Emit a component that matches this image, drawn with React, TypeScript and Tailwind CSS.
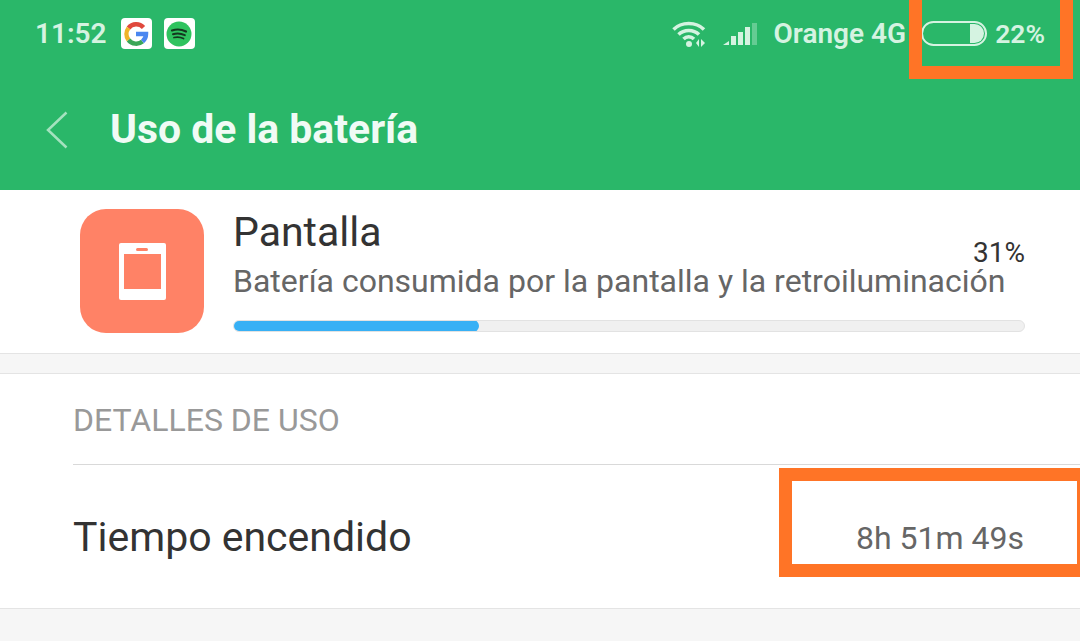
import React from 'react'

const WifiIcon = () => (
  <svg width="36" height="28" viewBox="0 0 36 28" fill="none" className="text-[#d5f3e1]">
    <path d="M1.500 9.500C9.500 1.500 24 1.500 32 9.500" stroke="currentColor" strokeWidth="3.500" />
    <path d="M6.500 14.500C12 9 21.500 9 27 14.500" stroke="currentColor" strokeWidth="3.500" />
    <path d="M11.500 19C14.500 16 19 16 22 19" stroke="currentColor" strokeWidth="3.500" />
    <circle cx="17" cy="24" r="3" fill="currentColor" />
    <path d="M27 19v8l-3-4zM29 19v8l4-4z" fill="currentColor" />
  </svg>
)

const SignalIcon = () => (
  <svg width="34" height="24" viewBox="0 0 34 24" className="text-[#d5f3e1]">
    <path d="M0 23l6-4v4z" fill="currentColor" />
    <rect x="8" y="14" width="5" height="9" fill="currentColor" />
    <rect x="15" y="10" width="5" height="13" fill="currentColor" />
    <rect x="22" y="5" width="5" height="18" fill="currentColor" />
    <rect x="29" y="1" width="5" height="22" fill="currentColor" opacity="0.35" />
  </svg>
)

const GoogleIcon = () => (
  <svg width="26" height="26" viewBox="0 0 26 26" fill="none" strokeWidth="4.500">
    <path d="M20.500 6.500A10 10 0 0 0 5.500 7" stroke="#e0483c" />
    <path d="M5.500 7A10 10 0 0 0 5.500 19" stroke="#f0b429" />
    <path d="M5.500 19A10 10 0 0 0 19.500 20.500" stroke="#3aa757" />
    <path d="M19.500 20.500A10 10 0 0 0 23 13H13" stroke="#4a86f0" />
  </svg>
)

const SpotifyIcon = () => (
  <svg width="26" height="26" viewBox="0 0 26 26" fill="none">
    <circle cx="13" cy="13" r="12.500" fill="#2fc35f" />
    <path d="M6 9.500C10.500 8 16 8.500 20 10.500" stroke="#14361f" strokeWidth="2.200" strokeLinecap="round" />
    <path d="M7 13.200C10.500 12 15.500 12.500 18.800 14.200" stroke="#14361f" strokeWidth="2" strokeLinecap="round" />
    <path d="M8 16.500C11 15.700 14.500 16 17.500 17.500" stroke="#14361f" strokeWidth="1.800" strokeLinecap="round" />
  </svg>
)

const BatteryIcon = () => (
  <div className="flex h-[25px] w-[66px] items-center justify-end rounded-full border-2 border-[#d5f3e1] pr-[1px]">
    <div className="h-[19px] w-[14px] rounded-r-full bg-[#d5f3e1]" />
  </div>
)

export default function App() {
  return (
    <div className="relative h-[641px] w-[1080px] overflow-hidden bg-[#f6f6f6] font-['Roboto',sans-serif]">
      <header className="h-[190px] bg-[#2ab769]">
        <div className="flex h-[67px] items-center pl-[35px] pr-[35px] text-[#d5f3e1]">
          <span className="text-[28px] font-semibold">11:52</span>
          <div className="ml-[14px] flex size-[31px] items-center justify-center rounded-[4px] bg-white">
            <GoogleIcon />
          </div>
          <div className="ml-[12px] flex size-[31px] items-center justify-center rounded-[4px] bg-white">
            <SpotifyIcon />
          </div>
          <div className="ml-auto flex items-center">
            <WifiIcon />
            <div className="ml-[15px]">
              <SignalIcon />
            </div>
            <span className="ml-[17px] text-[28px] font-semibold">Orange 4G</span>
            <div className="ml-[15px]">
              <BatteryIcon />
            </div>
            <span className="ml-[8px] text-[26.500px] font-semibold">22%</span>
          </div>
        </div>
        <div className="flex h-[126px] items-center pb-[1px] pl-[46px]">
          <svg width="22" height="38" viewBox="0 0 22 38" fill="none">
            <path d="M20.500 1.500L2 19l18.500 17.500" stroke="#a4e2bf" strokeWidth="2.500" />
          </svg>
          <h1 className="ml-[42px] text-[40.900px] font-bold text-[#f0fbf5]">Uso de la batería</h1>
        </div>
      </header>

      <section className="flex h-[164px] border-b border-[#e4e4e4] bg-white pl-20 pr-[55px] pt-[19px]">
        <div className="flex size-[124px] shrink-0 items-center justify-center rounded-[26px] bg-[#ff8266]">
          <div className="flex h-[57px] w-[47px] flex-col items-center rounded-[2px] bg-white px-[5px] pt-[5px]">
            <div className="h-[3px] w-[12px] rounded-full bg-[#ff8266]" />
            <div className="mt-[3px] h-[35px] w-full bg-[#ff8266]" />
          </div>
        </div>
        <div className="ml-[29px] min-w-0 flex-1">
          <div className="flex items-start justify-between">
            <span className="text-[41px] leading-[47px] text-[#333333]">Pantalla</span>
            <span className="mt-[32px] text-[28px] leading-[24px] text-[#333333]">31%</span>
          </div>
          <p className="whitespace-nowrap text-[32px] leading-[32px] text-[#666666]">
            Batería consumida por la pantalla y la retroiluminación
          </p>
          <div className="mt-[23px] h-[12px] overflow-hidden rounded-full border border-[#e2e2e2] bg-[#f0f0f0]">
            <div className="-m-px h-[12px] w-[246px] rounded-full bg-[#37b0f5]" />
          </div>
        </div>
      </section>

      <div className="h-[19px]" />

      <section className="h-[236px] border-y border-[#e4e4e4] bg-white pl-[73px]">
        <div className="flex h-[91px] items-center border-b border-[#d9d9d9] pt-[1px] text-[32px] text-[#999999]">
          DETALLES DE USO
        </div>
        <div className="flex h-[143px] items-center justify-between pr-[56px] pt-[2px]">
          <span className="text-[41px] text-[#333333]">Tiempo encendido</span>
          <span className="text-[32px] text-[#666666]">8h 51m 49s</span>
        </div>
      </section>

      {/* recuadros naranjas encima de la captura */}
      <div className="absolute -top-4 left-[909px] h-[95px] w-[164px] border-[13px] border-[#ff7426]" />
      <div className="absolute left-[779px] top-[468px] h-[109px] w-[301px] border-[13px] border-r-[3px] border-[#ff7426]" />
    </div>
  )
}
